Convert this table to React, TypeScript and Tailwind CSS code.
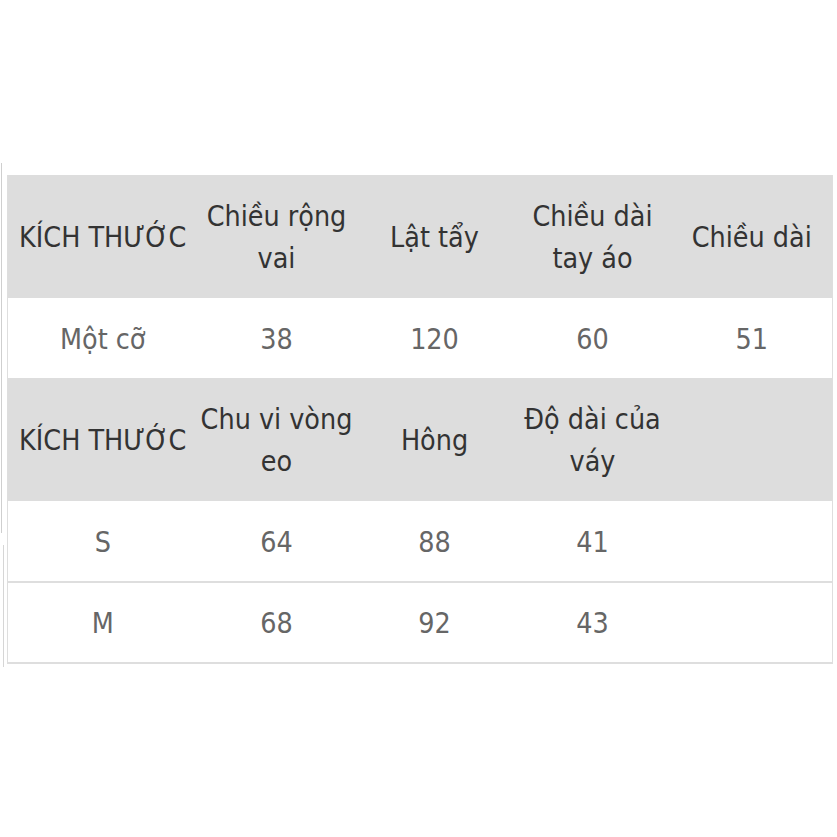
import React from "react";

const font = { fontFamily: '"DejaVu Sans Condensed", "DejaVu Sans", Verdana, sans-serif' };

function HeadRow({ cells }: { cells: string[][] }) {
  return (
    <tr className="bg-[#dddddd] h-[123px]">
      {cells.map((c, i) => (
        <td key={i} className="text-center align-middle text-[#333333] p-0 pt-[2px] leading-[42px]">
          {c.map((l, j) => (
            <div key={j} className="whitespace-nowrap">
              {l}
            </div>
          ))}
        </td>
      ))}
    </tr>
  );
}

function BodyRow({ cells }: { cells: string[] }) {
  return (
    <tr className="bg-white h-[81px] border-b-2 border-[#dedede]">
      {cells.map((c, i) => (
        <td key={i} className="text-center align-middle text-[#666666] pt-[4px]">
          {c}
        </td>
      ))}
    </tr>
  );
}

export default function App() {
  return (
    <div className="w-[837px] h-[837px] bg-white" style={font}>
      <div className="flex pt-[163px]">
        <div className="w-[7px] flex flex-col">
          <div className="ml-[1px] w-[1px] h-[370px] bg-[#cfcfcf]" />
          <div className="ml-[3px] mt-[12px] w-[1px] h-[122px] bg-[#d6d6d6]" />
        </div>
        <div className="pt-[12px]">
          <table className="border-collapse table-fixed w-[825px] text-[28.4px] border-l border-r border-[#dedede]">
            <colgroup>
              <col className="w-[190px]" />
              <col className="w-[158px]" />
              <col className="w-[158px]" />
              <col className="w-[158px]" />
              <col className="w-[161px]" />
            </colgroup>
            <tbody>
              <HeadRow
                cells={[["KÍCH THƯỚC"], ["Chiều rộng", "vai"], ["Lật tẩy"], ["Chiều dài", "tay áo"], ["Chiều dài"]]}
              />
              <tr className="bg-white h-[80px]">
                {["Một cỡ", "38", "120", "60", "51"].map((c, i) => (
                  <td key={i} className="text-center align-middle text-[#666666] pt-[4px]">
                    {c}
                  </td>
                ))}
              </tr>
              <HeadRow cells={[["KÍCH THƯỚC"], ["Chu vi vòng", "eo"], ["Hông"], ["Độ dài của", "váy"], [""]]} />
              <BodyRow cells={["S", "64", "88", "41", ""]} />
              <BodyRow cells={["M", "68", "92", "43", ""]} />
            </tbody>
          </table>
        </div>
      </div>
    </div>
  );
}
